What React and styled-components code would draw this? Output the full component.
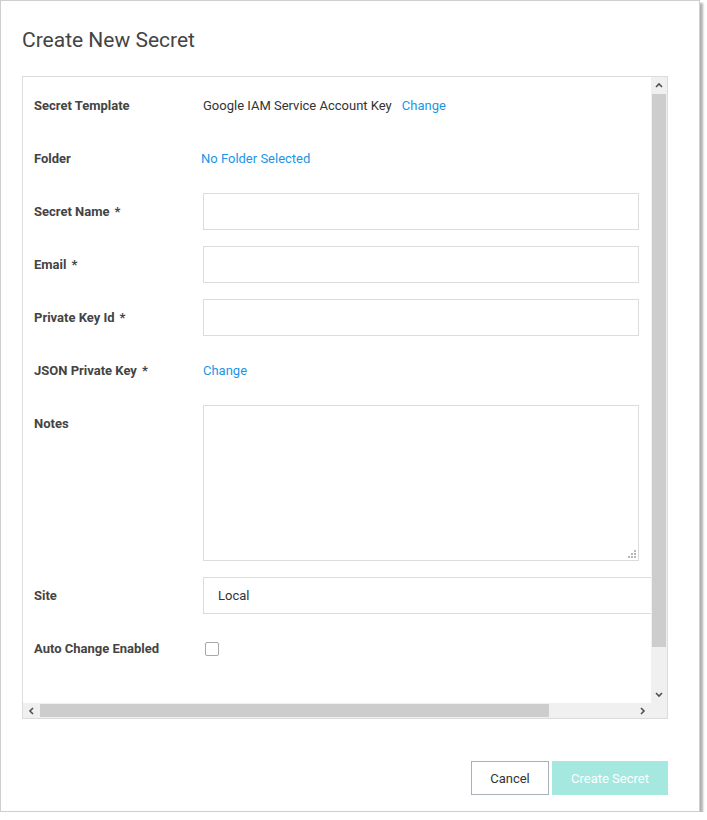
import React from 'react'
import styled, { createGlobalStyle } from 'styled-components';

const GlobalStyle = createGlobalStyle`
    body {
        margin: 0;
        background: #ffffff;
        font-family: Roboto, "Liberation Sans", sans-serif;
    }
`;

function Chevron({ dir }) {
    const points = {
        up: '1,5 4,2 7,5',
        down: '1,2 4,5 7,2',
        left: '5,1 2,4 5,7',
        right: '2,1 5,4 2,7',
    }[dir];
    return (
        <svg width="8" height="8" viewBox="0 0 8 8">
            <polyline points={points} fill="none" stroke="#505050" strokeWidth="1.6" />
        </svg>
    );
}

function Grip() {
    const dots = [[6, 0], [6, 3], [3, 3], [6, 6], [3, 6], [0, 6]];
    return (
        <GripIcon width="8" height="8" viewBox="0 0 8 8">
            {dots.map(([x, y]) => <rect key={`${x}-${y}`} x={x} y={y} width="2" height="2" fill="#b8b8b8" />)}
        </GripIcon>
    );
}

const fields = [
    { label: 'Secret Name', required: true },
    { label: 'Email', required: true },
    { label: 'Private Key Id', required: true },
];

function App() {
    return (
        <>
            <GlobalStyle />
            <Modal>
                <Title>Create New Secret</Title>
                <Panel>
                    <Content>
                        <Form>
                            <Label>Secret Template</Label>
                            <Value>
                                <Text>Google IAM Service Account Key</Text>
                                <Link>Change</Link>
                            </Value>

                            <Label>Folder</Label>
                            <Value>
                                <Link shift>No Folder Selected</Link>
                            </Value>

                            {fields.map((f) => (
                                <React.Fragment key={f.label}>
                                    <Label>{f.label}<Star>*</Star></Label>
                                    <Input type="text" />
                                </React.Fragment>
                            ))}

                            <Label>JSON Private Key<Star>*</Star></Label>
                            <Value>
                                <Link flush>Change</Link>
                            </Value>

                            <Label>Notes</Label>
                            <NotesBox>
                                <Notes />
                                <Grip />
                            </NotesBox>

                            <Label>Site</Label>
                            <Select>Local</Select>

                            <Label>Auto Change Enabled</Label>
                            <Value>
                                <Checkbox />
                            </Value>
                        </Form>
                    </Content>

                    <VBar>
                        <ArrowBtn tall><Chevron dir="up" /></ArrowBtn>
                        <VThumb />
                        <Track />
                        <ArrowBtn tall><Chevron dir="down" /></ArrowBtn>
                    </VBar>

                    <HBar>
                        <ArrowBtn><Chevron dir="left" /></ArrowBtn>
                        <HThumb />
                        <Track />
                        <ArrowBtn><Chevron dir="right" /></ArrowBtn>
                    </HBar>

                    <Corner />
                </Panel>

                <Footer>
                    <CancelButton>Cancel</CancelButton>
                    <CreateButton>Create Secret</CreateButton>
                </Footer>
            </Modal>
        </>
    )
}

const Modal = styled.div`
    box-sizing: border-box;
    width: 700px;
    height: 812px;
    border: 1px solid #cfcfcf;
    box-shadow: 3px 3px 2px rgba(0, 0, 0, 0.3);
    background: #ffffff;
    padding: 27px 31px 16px 21px;
    display: flex;
    flex-direction: column;
`;

const Title = styled.h1`
    margin: 0 0 24px 0;
    font-size: 21px;
    line-height: 24px;
    font-weight: 400;
    color: #444444;
`;

const Panel = styled.div`
    box-sizing: border-box;
    width: 646px;
    height: 643px;
    border: 1px solid #dcdcdc;
    display: grid;
    grid-template-columns: 628px 16px;
    grid-template-rows: 626px 15px;
`;

const Content = styled.div`
    overflow: hidden;
    padding: 10px 0 0 11px;
`;

const Form = styled.div`
    display: grid;
    grid-template-columns: 169px 500px;
    row-gap: 16px;
    align-items: start;
`;

const Label = styled.div`
    font-size: 13px;
    line-height: 37px;
    font-weight: 700;
    color: #444444;
    white-space: nowrap;
`;

const Star = styled.span`
    margin-left: 5px;
`;

const Value = styled.div`
    height: 37px;
    display: flex;
    align-items: center;
    font-size: 13px;
`;

const Text = styled.span`
    color: #333333;
`;

const Link = styled.a`
    color: #1a96e8;
    cursor: pointer;
    margin-left: ${p => (p.shift ? '-2px' : p.flush ? '0' : '10px')};
`;

const Input = styled.input`
    box-sizing: border-box;
    width: 436px;
    height: 37px;
    margin: 0;
    border: 1px solid #dcdcdc;
    font-family: inherit;
    font-size: 13px;
    outline: none;
`;

const NotesBox = styled.div`
    position: relative;
    width: 436px;
    height: 156px;
`;

const Notes = styled.textarea`
    box-sizing: border-box;
    width: 100%;
    height: 100%;
    margin: 0;
    display: block;
    border: 1px solid #dcdcdc;
    resize: none;
    outline: none;
`;

const GripIcon = styled.svg`
    position: absolute;
    right: 3px;
    bottom: 3px;
`;

const Select = styled.div`
    box-sizing: border-box;
    width: 500px;
    height: 37px;
    border: 1px solid #dcdcdc;
    display: flex;
    align-items: center;
    padding-left: 14px;
    font-size: 13px;
    color: #333333;
`;

const Checkbox = styled.span`
    box-sizing: border-box;
    display: block;
    width: 14px;
    height: 14px;
    margin: 1px 0 0 2px;
    border: 1px solid #a8a8a8;
    border-radius: 2px;
`;

const VBar = styled.div`
    display: flex;
    flex-direction: column;
    background: #f0f0f0;
`;

const HBar = styled.div`
    display: flex;
    background: #f0f0f0;
`;

const ArrowBtn = styled.div`
    flex: none;
    width: ${p => (p.tall ? '16px' : '17px')};
    height: ${p => (p.tall ? '17px' : '15px')};
    display: flex;
    align-items: center;
    justify-content: center;
`;

const VThumb = styled.div`
    flex: none;
    height: 553px;
    margin: 0 1px;
    background: #cdcdcd;
`;

const HThumb = styled.div`
    flex: none;
    width: 509px;
    margin: 1px 0;
    background: #cdcdcd;
`;

const Track = styled.div`
    flex: 1;
`;

const Corner = styled.div`
    background: #f0f0f0;
`;

const Footer = styled.div`
    margin-top: 42px;
    width: 646px;
    display: flex;
    justify-content: flex-end;
    gap: 3px;
`;

const BaseButton = styled.button`
    box-sizing: border-box;
    height: 34px;
    margin: 0;
    font-family: Roboto, "Liberation Sans", sans-serif;
    font-size: 13px;
    cursor: pointer;
`;

const CancelButton = styled(BaseButton)`
    width: 78px;
    background: #ffffff;
    border: 1px solid #a9b1ba;
    color: #333333;
`;

const CreateButton = styled(BaseButton)`
    width: 116px;
    background: #a5e8e0;
    border: none;
    color: #ffffff;
`;

export default App
